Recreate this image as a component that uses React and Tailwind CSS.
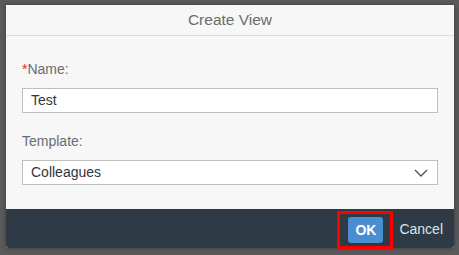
import React from "react";

// Create View dialog
export default function App() {
    return (
        <div
            className="w-[459px] h-[255px] bg-[#5a5a5a] pt-[5px] pl-[6px]"
            style={{ fontFamily: '"Liberation Sans", Arial, sans-serif' }}
        >
            <div className="w-[448px] h-[243px] flex flex-col bg-[#f7f7f7] rounded-b-[3px] shadow-[0_0_4px_rgba(0,0,0,0.35)]">
                <div className="h-[31px] flex items-center justify-center border-b border-[#dedede] text-[15.5px] text-[#6a6d70]">
                    Create View
                </div>
                <div className="flex-1 flex flex-col px-[16px] pt-[24px]">
                    <label className="h-[18px] leading-[18px] text-[14px] text-[#6a6d70]">
                        <span className="text-[#d0312d]">*</span>Name:
                    </label>
                    <div className="mt-[10px] h-[25px] w-[416px] bg-white border border-[#bfbfbf] flex items-center px-[8px] text-[14px] text-[#32363a]">
                        Test
                    </div>
                    <label className="mt-[19px] h-[18px] leading-[18px] text-[14px] text-[#6a6d70]">
                        Template:
                    </label>
                    <div className="mt-[10px] h-[25px] w-[416px] bg-white border border-[#bfbfbf] flex items-center justify-between pl-[8px] pr-[9px] text-[14px] text-[#32363a]">
                        <span>Colleagues</span>
                        <svg width="14" height="8" viewBox="0 0 14 8" fill="none">
                            <polyline points="1,1 7,7 13,1" stroke="#4a4f55" strokeWidth="1.3" />
                        </svg>
                    </div>
                </div>
                <div className="h-[39px] bg-[#2e3a46] rounded-b-[3px] flex items-start justify-end pr-[11px]">
                    <div className="mt-[2px] border-[3px] border-[#ff0000] pl-[8px] pr-[7px] py-[3px]">
                        <button className="w-[35px] h-[26px] rounded-[3px] bg-[#4b8ecf] text-white text-[14px] font-semibold flex items-center justify-center">
                            OK
                        </button>
                    </div>
                    <button className="ml-[6px] h-[39px] pt-[2px] text-[14px] text-[#dde4ea]">
                        Cancel
                    </button>
                </div>
            </div>
        </div>
    );
}
